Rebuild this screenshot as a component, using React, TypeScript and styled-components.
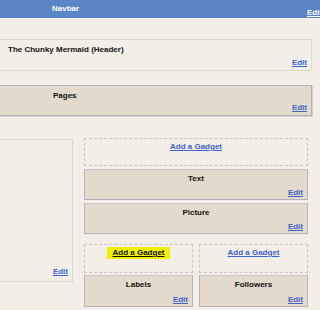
import styled, { createGlobalStyle } from "styled-components";

const GlobalStyle = createGlobalStyle`
  html, body {
    margin: 0;
    padding: 0;
    background: #f3efe8;
    overflow: hidden;
  }
  body {
    font-family: "Liberation Sans", Arial, sans-serif;
    font-size: 8px;
    font-weight: bold;
  }
`;

const tan = "#e4dacb";
const linkBlue = "#3d63c9";

const Page = styled.div`
  width: 320px;
  height: 310px;
  overflow: hidden;
`;

const Navbar = styled.div`
  height: 18px;
  background: #5a86c6;
  color: #fff;
  position: relative;
`;

const NavTitle = styled.span`
  position: absolute;
  left: 52px;
  top: 4px;
`;

const NavEdit = styled.span`
  position: absolute;
  left: 307px;
  top: 8px;
  text-decoration: underline;
`;

const Content = styled.div`
  padding: 21px 8px 0 0;
  display: flex;
  flex-direction: column;
`;

const Box = styled.div<{ $h: number; $tan?: boolean; $mt?: number }>`
  height: ${(p) => p.$h}px;
  margin-top: ${(p) => p.$mt ?? 0}px;
  box-sizing: border-box;
  display: flex;
  flex-direction: column;
  justify-content: space-between;
  background: ${(p) => (p.$tan ? tan : "transparent")};
  border: 1px solid ${(p) => (p.$tan ? "#b4b0bd" : "#dcd9d1")};
  border-left: none;
  box-shadow: ${(p) => (p.$tan ? "1px 1px 0 #d2cec6" : "none")};
  padding: 5px 4px 3px 8px;
`;

const Title = styled.div<{ $indent?: number }>`
  color: #111;
  padding-left: ${(p) => p.$indent ?? 0}px;
`;

const Edit = styled.a`
  align-self: flex-end;
  color: ${linkBlue};
  text-decoration: underline;
`;

const MainRow = styled.div`
  display: flex;
  align-items: flex-start;
  margin-top: 22px;
  gap: 11px;
`;

const MainCol = styled.div`
  width: 73px;
  height: 143px;
  margin-top: 1px;
  box-sizing: border-box;
  border: 1px solid #d6d6ce;
  border-left: none;
  display: flex;
  flex-direction: column;
  justify-content: flex-end;
  padding: 0 4px 5px 0;
`;

const Sidebar = styled.div`
  width: 224px;
  display: flex;
  flex-direction: column;
  gap: 3px;
`;

const AddBox = styled.div<{ $h: number }>`
  height: ${(p) => p.$h}px;
  box-sizing: border-box;
  border: 1px dashed #cbc7be;
  text-align: center;
  padding-top: 3px;
`;

const AddLink = styled.a<{ $hl?: boolean }>`
  color: ${(p) => (p.$hl ? "#111" : linkBlue)};
  background: ${(p) => (p.$hl ? "#f2f000" : "transparent")};
  text-decoration: underline;
  padding: ${(p) => (p.$hl ? "1px 5px 2px" : "0")};
`;

const Widget = styled.div<{ $h: number }>`
  height: ${(p) => p.$h}px;
  box-sizing: border-box;
  background: ${tan};
  border: 1px solid #b4b0bd;
  border-top-color: #c9c5cc;
  display: flex;
  flex-direction: column;
  justify-content: space-between;
  align-items: center;
  padding: 4px 4px 2px;
`;

const WidgetTitle = styled.div`
  color: #111;
`;

const Pair = styled.div`
  margin-top: 7px;
  display: grid;
  grid-template-columns: 109px 109px;
  column-gap: 6px;
  row-gap: 2px;
`;

function WidgetBox({ title, h }: { title: string; h: number }) {
  return (
    <Widget $h={h}>
      <WidgetTitle>{title}</WidgetTitle>
      <Edit>Edit</Edit>
    </Widget>
  );
}

export default function App() {
  return (
    <Page>
      <GlobalStyle />
      <Navbar>
        <NavTitle>Navbar</NavTitle>
        <NavEdit>Edit</NavEdit>
      </Navbar>
      <Content>
        <Box $h={32}>
          <Title>The Chunky Mermaid (Header)</Title>
          <Edit>Edit</Edit>
        </Box>
        <Box $h={31} $tan $mt={14}>
          <Title $indent={45}>Pages</Title>
          <Edit>Edit</Edit>
        </Box>
        <MainRow>
          <MainCol>
            <Edit>Edit</Edit>
          </MainCol>
          <Sidebar>
            <AddBox $h={28}>
              <AddLink>Add a Gadget</AddLink>
            </AddBox>
            <WidgetBox title="Text" h={31} />
            <WidgetBox title="Picture" h={31} />
            <Pair>
              <AddBox $h={29}>
                <AddLink $hl>Add a Gadget</AddLink>
              </AddBox>
              <AddBox $h={29}>
                <AddLink>Add a Gadget</AddLink>
              </AddBox>
              <WidgetBox title="Labels" h={32} />
              <WidgetBox title="Followers" h={32} />
            </Pair>
          </Sidebar>
        </MainRow>
      </Content>
    </Page>
  );
}
